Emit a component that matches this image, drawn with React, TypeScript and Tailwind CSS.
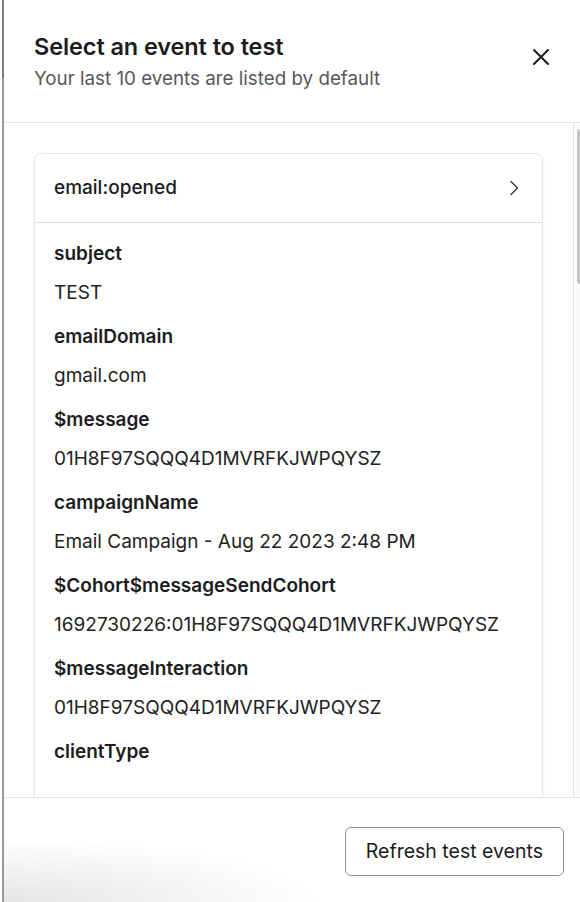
import React from 'react';

const fields: { label: string; value?: string }[] = [
  { label: 'subject', value: 'TEST' },
  { label: 'emailDomain', value: 'gmail.com' },
  { label: '$message', value: '01H8F97SQQQ4D1MVRFKJWPQYSZ' },
  { label: 'campaignName', value: 'Email Campaign - Aug 22 2023 2:48 PM' },
  { label: '$Cohort$messageSendCohort', value: '1692730226:01H8F97SQQQ4D1MVRFKJWPQYSZ' },
  { label: '$messageInteraction', value: '01H8F97SQQQ4D1MVRFKJWPQYSZ' },
  { label: 'clientType' },
];

const App: React.FC = () => {
  return (
    <div
      className="relative flex h-[902px] w-[580px] overflow-hidden bg-white text-[#1c1c1e]"
      style={{ fontFamily: 'Inter, "Noto Sans", sans-serif' }}
    >
      {/* edge of the page behind the drawer */}
      <div className="ml-[2px] flex w-[2px] flex-col">
        <div className="h-[78px] bg-[#7a7a7a]" />
        <div className="flex-1 bg-[#9a9a9a]" />
      </div>

      <div className="flex flex-1 flex-col">
        {/* header */}
        <div className="flex h-[123px] items-start justify-between border-b border-[#e4e4e4] pl-[30px] pr-[30px] pt-[33px]">
          <div>
            <h2 className="text-[23.5px] font-semibold leading-[28px] tracking-[-0.1px]">Select an event to test</h2>
            <p className="mt-[6px] text-[18.8px] leading-[24px] text-[#58585a]">Your last 10 events are listed by default</p>
          </div>
          <button className="mt-[15px] text-[#1c1c1e]">
            <svg width="18" height="18" viewBox="0 0 18 18" fill="none" stroke="currentColor" strokeWidth="2" strokeLinecap="round">
              <path d="M2 2L16 16M16 2L2 16" />
            </svg>
          </button>
        </div>

        {/* scrolling list */}
        <div className="flex flex-1 overflow-hidden">
          <div className="flex-1 overflow-hidden px-[30px] pt-[30px]">
            <div className="rounded-lg border border-[#e6e6e6] bg-white shadow-[0_1px_4px_rgba(0,0,0,0.06)]">
              <div className="flex h-[69px] items-center justify-between border-b border-[#dedede] px-[19px]">
                <span className="text-[19px] font-medium">email:opened</span>
                <svg width="10" height="16" viewBox="0 0 10 16" fill="none" stroke="#444" strokeWidth="1.6" strokeLinecap="round" strokeLinejoin="round" className="mr-[4px]">
                  <path d="M2 1.5L8.5 8L2 14.5" />
                </svg>
              </div>
              <div className="flex flex-col gap-[20px] px-[19px] pt-[19px] pb-[60px]">
                {fields.map((f) => (
                  <div key={f.label}>
                    <div className="text-[19px] font-semibold leading-[24px]">{f.label}</div>
                    {f.value && <div className="mt-[15px] text-[19px] leading-[24px] text-[#222]">{f.value}</div>}
                  </div>
                ))}
              </div>
            </div>
          </div>
          {/* scrollbar */}
          <div className="flex w-[7px] border-l border-[#e2e2e2] bg-[#fafafa] pt-[6px]">
            <div className="ml-auto h-[155px] w-[3px] rounded-l-full bg-[#c4c4c4]" />
          </div>
        </div>

        {/* footer */}
        <div className="flex h-[105px] shrink-0 items-start justify-end border-t border-[#e4e4e4] pr-[16px] pt-[29px]">
          <button className="h-[49px] rounded-md border border-[#8e8e8e] bg-white px-[20px] text-[19.5px] text-[#1c1c1e]">
            Refresh test events
          </button>
        </div>
      </div>

      {/* soft shadow in the lower left corner */}
      <div className="pointer-events-none absolute bottom-0 left-[4px] h-[65px] w-[320px] bg-[radial-gradient(ellipse_at_bottom_left,rgba(0,0,0,0.1),transparent_70%)]" />
    </div>
  );
};

export default App;
